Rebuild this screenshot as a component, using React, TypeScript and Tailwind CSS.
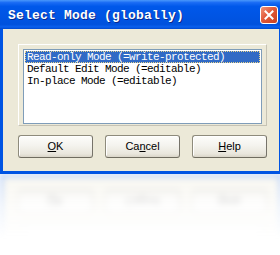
import React from 'react';

const items = [
  'Read-only Mode (=write-protected)',
  'Default Edit Mode (=editable)',
  'In-place Mode (=editable)',
];

function XpButton({ label, hot }: { label: string; hot: number }) {
  return (
    <button className="w-[75px] h-[23px] flex items-center justify-center rounded-[3px] border border-[#8e8b7c] border-b-[#6f6c5f] border-r-[#76736a] bg-[linear-gradient(to_bottom,#fdfdfb_0%,#f4f3ee_45%,#e9e6dc_85%,#d9d5c8_100%)] shadow-[inset_1px_1px_0_#ffffff] font-['Liberation_Sans',Arial,sans-serif] text-[11px] text-black">
      {label.slice(0, hot)}
      <span className="underline underline-offset-[1px]">{label[hot]}</span>
      {label.slice(hot + 1)}
    </button>
  );
}

function Dialog() {
  return (
    <div className="w-[282px] h-[174px] flex flex-col bg-[#0054e3]">
      <div className="h-[29px] shrink-0 flex items-center justify-between pl-[8px] pr-[4px] bg-[linear-gradient(to_bottom,#4a98fb_0%,#1a6cf4_9%,#0058ea_22%,#0054e3_60%,#0052dd_84%,#0a60ee_93%,#0048cc_100%)]">
        <span className="text-white font-bold font-['Liberation_Mono',monospace] text-[13px] tracking-[0.2px] leading-none pt-[1px] [text-shadow:1px_1px_0_#0b2a8c]">
          Select Mode (globally)
        </span>
        <div className="w-[18px] h-[18px] rounded-[3px] border border-white bg-[linear-gradient(135deg,#f19478_0%,#e2593a_45%,#c93f1e_100%)] flex items-center justify-center">
          <svg width="10" height="10" viewBox="0 0 10 10">
            <path d="M1.5 1.5 L8.5 8.5 M8.5 1.5 L1.5 8.5" stroke="white" strokeWidth="2" strokeLinecap="square" />
          </svg>
        </div>
      </div>
      <div className="flex-1 mx-[3px] mb-[3px] bg-[#ece9d8] pt-[15px] pl-[15px] flex flex-col">
        <div className="w-[249px] h-[82px] border border-t-white border-l-white border-r-[#c6c3b4] border-b-[#c6c3b4] pt-[4px] pl-[4px]">
          <div className="w-[239px] h-[75px] border border-[#7f9db9] bg-white pt-[1px] px-[1px] font-['Liberation_Mono',monospace] text-[11px] tracking-[-0.6px] leading-[12px] text-black">
            {items.map((t, i) => (
              <div
                key={t}
                className={
                  i === 0
                    ? 'h-[12px] pl-[2px] bg-[#316ac5] text-white outline-1 outline-dotted outline-[#e8d48c] -outline-offset-1 whitespace-nowrap'
                    : 'h-[12px] pl-[2px] whitespace-nowrap'
                }
              >
                {t}
              </div>
            ))}
          </div>
        </div>
        <div className="mt-[9px] flex gap-[12px]">
          <XpButton label="OK" hot={0} />
          <XpButton label="Cancel" hot={2} />
          <XpButton label="Help" hot={0} />
        </div>
      </div>
    </div>
  );
}

export default function App() {
  return (
    <div className="w-[280px] h-[255px] overflow-hidden bg-white">
      <Dialog />
      <div className="h-[81px] overflow-hidden [mask-image:linear-gradient(to_bottom,rgba(0,0,0,0.6)_0%,rgba(0,0,0,0.22)_40%,transparent_80%)]">
        <div className="-scale-y-100 blur-[3px] opacity-60">
          <Dialog />
        </div>
      </div>
    </div>
  );
}
